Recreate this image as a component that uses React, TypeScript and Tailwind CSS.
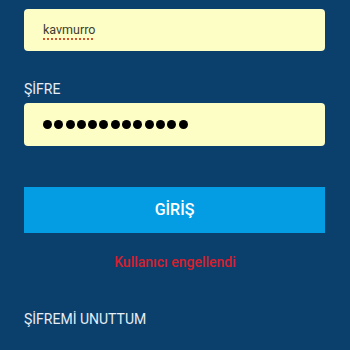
import React from "react";

const App: React.FC = () => {
  const dots = Array.from({ length: 13 });
  return (
    <div
      className="w-[350px] h-[350px] overflow-hidden bg-[#0b3f6c] px-6 pt-[9px]"
      style={{ fontFamily: "Roboto, 'Noto Sans', sans-serif" }}
    >
      {/* kullanıcı adı */}
      <div className="h-[42px] w-[301px] rounded-[4px] bg-[#fdfdc6] flex items-center pl-[19px]">
        <span className="text-[12.5px] leading-none text-[#3d3d30] underline decoration-dotted decoration-[#d2552e] decoration-[1.5px] underline-offset-[4px] mt-[1px]">
          kavmurro
        </span>
      </div>

      <div className="mt-[28px] text-[14px] leading-[20px] text-[#e6eef6]">ŞİFRE</div>

      {/* şifre */}
      <div className="mt-[4px] h-[43px] w-[301px] rounded-[4px] bg-[#fdfdc6] flex items-center pl-[19px]">
        <div className="flex gap-[2.3px] mt-[-1px]">
          {dots.map((_, i) => (
            <span key={i} className="block w-[9px] h-[9px] rounded-full bg-black" />
          ))}
        </div>
      </div>

      <button className="mt-[41px] h-[46px] w-[301px] bg-[#049ce2] text-white text-[16px] font-medium flex items-center justify-center">
        GİRİŞ
      </button>

      <div className="mt-[19px] text-center text-[14px] leading-[20px] font-medium text-[#d41f2e]">
        Kullanıcı engellendi
      </div>

      <div className="mt-[37px] text-[14px] leading-[20px] text-[#e6eef6]">ŞİFREMİ UNUTTUM</div>
    </div>
  );
};

export default App;
